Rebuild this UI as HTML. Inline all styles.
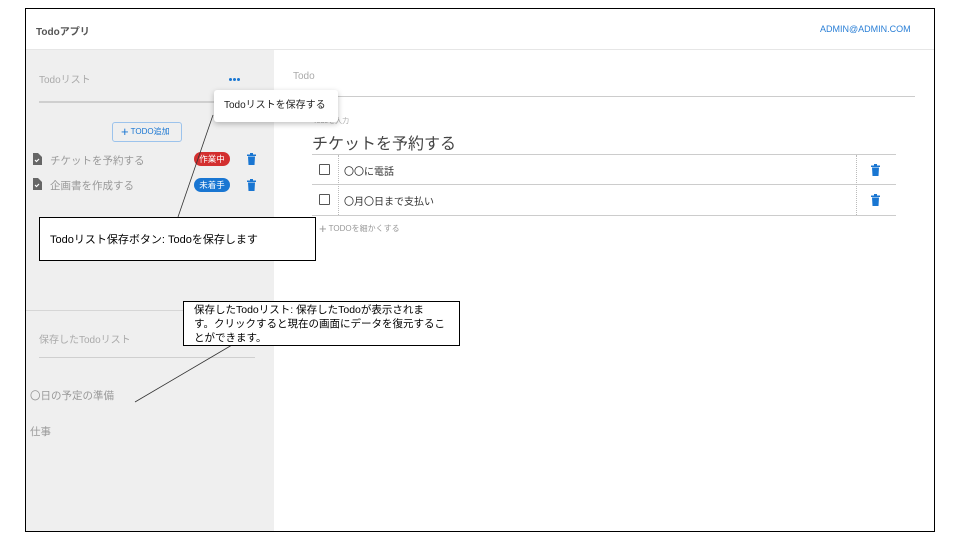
<!DOCTYPE html>
<html><head><meta charset="utf-8"><style>
*{margin:0;padding:0;box-sizing:border-box}
body{width:960px;height:540px;background:#fff;position:relative;overflow:hidden;font-family:"Liberation Sans","Noto Sans CJK JP",sans-serif;}
.a{position:absolute;white-space:nowrap}
.frame{position:absolute;left:25px;top:8px;width:910px;height:524px;border:1px solid #000;}
.side{position:absolute;left:26px;top:50px;width:248px;height:481px;background:#efefef}
.g{color:#999;font-size:11px}
.trash{position:absolute;width:9px;height:12px}
.badge{position:absolute;height:14px;border-radius:7px;color:#fff;font-size:8.5px;line-height:14px;text-align:center}
.box{position:absolute;border:1px solid #000;background:#fff;font-size:11px;color:#000}
.cb{position:absolute;width:11px;height:11px;border:1.3px solid #555;border-radius:1px}
.dot{position:absolute;width:3px;height:3px;border-radius:50%;background:#1976d2}
</style></head><body>
<div class="frame"></div>
<div class="a" style="left:26px;top:49px;width:908px;height:1px;background:#e6e6e6"></div>
<div class="a" style="left:36px;top:23px;font-size:10px;color:#555;font-weight:bold">Todoアプリ</div>
<div class="a" style="left:820px;top:24px;font-size:9px;color:#2a7fd6">ADMIN@ADMIN.COM</div>
<div class="side"></div>
<div class="a g" style="left:39px;top:71px;font-size:10px;color:#aaa">Todoリスト</div>
<div class="dot" style="left:229px;top:78px"></div><div class="dot" style="left:233px;top:78px"></div><div class="dot" style="left:237px;top:78px"></div>
<div class="a" style="left:39px;top:101px;width:176px;height:2px;background:#cfcfcf"></div>
<div class="a" style="left:112px;top:122px;width:70px;height:20px;border:1px solid #9cc3ec;border-radius:3px;font-size:8px;color:#1976d2;line-height:18px;padding-left:8px"><span style="font-size:13px;vertical-align:-2px">+</span> TODO追加</div>
<svg class="a" style="left:32px;top:153px" width="10" height="12" viewBox="0 0 10 12"><path d="M1 0h5l4 4v8H1z" fill="#666"/><path d="M3 7l1.5 1.5L7 6" stroke="#fff" stroke-width="1.2" fill="none"/></svg>
<div class="a g" style="left:50px;top:153px;font-size:10.5px">チケットを予約する</div>
<div class="badge" style="left:194px;top:152px;width:36px;background:#d32f2f">作業中</div>
<svg class="trash" style="left:247px;top:153px" viewBox="0 0 9 12"><path d="M0 1.5h9v1.5H0zM3 0h3v1.5H3zM1 3.5h7l-.5 8.5h-6z" fill="#1976d2"/></svg>
<svg class="a" style="left:32px;top:178px" width="10" height="12" viewBox="0 0 10 12"><path d="M1 0h5l4 4v8H1z" fill="#666"/><path d="M3 7l1.5 1.5L7 6" stroke="#fff" stroke-width="1.2" fill="none"/></svg>
<div class="a g" style="left:50px;top:178px;font-size:10.5px">企画書を作成する</div>
<div class="badge" style="left:194px;top:178px;width:36px;background:#1976d2">未着手</div>
<svg class="trash" style="left:247px;top:179px" viewBox="0 0 9 12"><path d="M0 1.5h9v1.5H0zM3 0h3v1.5H3zM1 3.5h7l-.5 8.5h-6z" fill="#1976d2"/></svg>
<div class="a" style="left:26px;top:310px;width:248px;height:1px;background:#d6d6d6"></div>
<div class="a g" style="left:39px;top:331px;font-size:10px;color:#aaa">保存したTodoリスト</div>
<div class="a" style="left:39px;top:357px;width:216px;height:1px;background:#cfcfcf"></div>
<div class="a g" style="left:30px;top:388px;font-size:10.5px">〇日の予定の準備</div>
<div class="a g" style="left:30px;top:424px;font-size:10.5px">仕事</div>
<div class="a" style="left:293px;top:71px;font-size:10px;color:#aaa">Todo</div>
<div class="a" style="left:293px;top:96px;width:622px;height:1px;background:#ccc"></div>
<div class="a" style="left:313px;top:116px;font-size:7px;color:#aaa">Todoを入力</div>
<div class="a" style="left:312px;top:130px;font-size:16px;color:#444">チケットを予約する</div>
<div class="a" style="left:312px;top:154px;width:584px;height:1px;background:#ccc"></div>
<div class="a" style="left:312px;top:184px;width:584px;height:1px;background:#ccc"></div>
<div class="a" style="left:312px;top:215px;width:584px;height:1px;background:#ccc"></div>
<div class="a" style="left:338px;top:155px;width:1px;height:60px;border-left:1px dotted #bbb"></div>
<div class="a" style="left:856px;top:155px;width:1px;height:60px;border-left:1px dotted #bbb"></div>
<div class="cb" style="left:319px;top:164px"></div>
<div class="cb" style="left:319px;top:194px"></div>
<div class="a" style="left:344px;top:163px;font-size:10px;color:#333">〇〇に電話</div>
<div class="a" style="left:344px;top:193px;font-size:10px;color:#333">〇月〇日まで支払い</div>
<svg class="trash" style="left:871px;top:164px" viewBox="0 0 9 12"><path d="M0 1.5h9v1.5H0zM3 0h3v1.5H3zM1 3.5h7l-.5 8.5h-6z" fill="#1976d2"/></svg>
<svg class="trash" style="left:871px;top:194px" viewBox="0 0 9 12"><path d="M0 1.5h9v1.5H0zM3 0h3v1.5H3zM1 3.5h7l-.5 8.5h-6z" fill="#1976d2"/></svg>
<div class="a" style="left:319px;top:221px;font-size:8px;color:#999"><span style="font-size:13px;vertical-align:-2px">+</span> TODOを細かくする</div>
<div class="a" style="left:214px;top:90px;width:124px;height:32px;background:#fff;border-radius:3px;box-shadow:0 2px 6px rgba(0,0,0,.25);font-size:10px;color:#222;line-height:32px;padding-left:10px">Todoリストを保存する</div>
<svg class="a" style="left:0;top:0" width="960" height="540"><line x1="213" y1="115" x2="178" y2="217" stroke="#333" stroke-width="0.8"/><line x1="232" y1="345" x2="135" y2="402" stroke="#333" stroke-width="0.8"/></svg>
<div class="box" style="left:39px;top:217px;width:277px;height:44px;line-height:44px;padding-left:10px">Todoリスト保存ボタン: Todoを保存します</div>
<div class="box" style="left:183px;top:301px;width:277px;height:45px;padding:1px 10px;line-height:14px;font-size:10.5px;white-space:normal">保存したTodoリスト: 保存したTodoが表示されま<br>す。クリックすると現在の画面にデータを復元するこ<br>とができます。</div>
</body></html>
